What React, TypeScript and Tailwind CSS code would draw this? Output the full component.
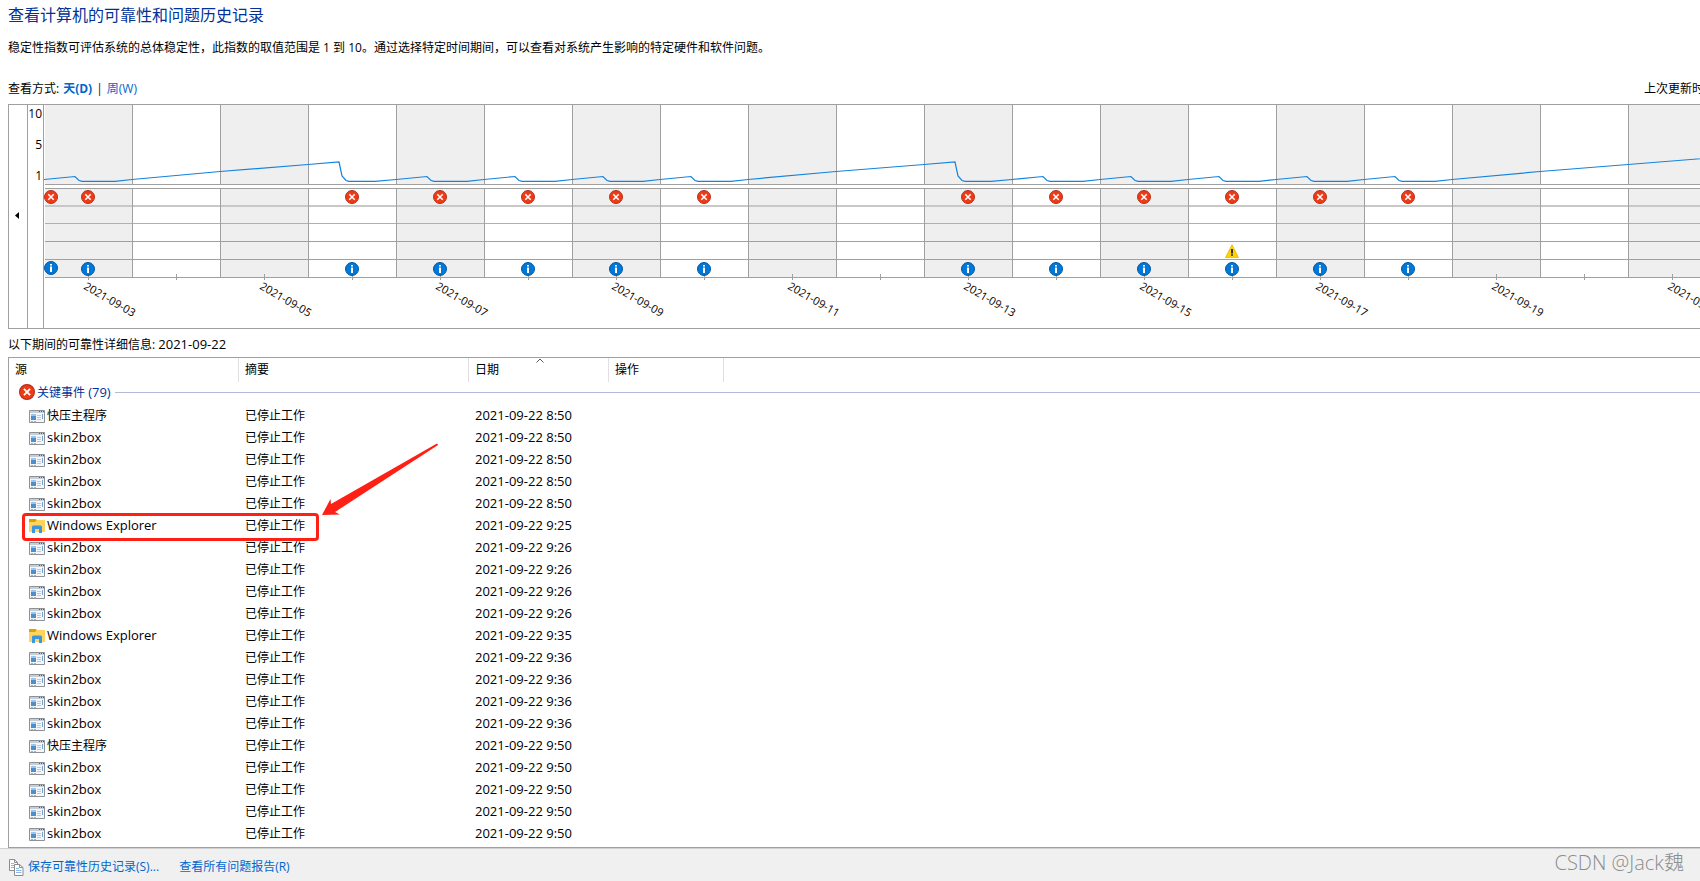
import clsx from "clsx";

type Day = {
  shape: "dip" | "peak" | "rise";
  from: number;
  to: number;
  label?: string;
  events?: boolean;
  warning?: boolean;
};

type EventRow = {
  name: string;
  time: string;
};

const DAY_WIDTH = 88;

const dip = { shape: "dip", from: 75, to: 75, events: true } as const;
const peak = { shape: "peak", from: 60, to: 75, events: true } as const;

const days: Day[] = [
  { ...dip, label: "2021-09-03" },
  { shape: "rise", from: 75, to: 67 },
  { shape: "rise", from: 67, to: 60, label: "2021-09-05" },
  { ...peak },
  { ...dip, label: "2021-09-07" },
  { ...dip },
  { ...dip, label: "2021-09-09" },
  { ...dip },
  { shape: "rise", from: 75, to: 67, label: "2021-09-11" },
  { shape: "rise", from: 67, to: 60 },
  { ...peak, label: "2021-09-13" },
  { ...dip },
  { ...dip, label: "2021-09-15" },
  { ...dip, warning: true },
  { ...dip, label: "2021-09-17" },
  { ...dip },
  { shape: "rise", from: 75, to: 67, label: "2021-09-19" },
  { shape: "rise", from: 67, to: 60 },
  { shape: "rise", from: 60, to: 53, label: "2021-09-21" },
];

const events: EventRow[] = [
  { name: "快压主程序", time: "8:50" },
  { name: "skin2box", time: "8:50" },
  { name: "skin2box", time: "8:50" },
  { name: "skin2box", time: "8:50" },
  { name: "skin2box", time: "8:50" },
  { name: "Windows Explorer", time: "9:25" },
  { name: "skin2box", time: "9:26" },
  { name: "skin2box", time: "9:26" },
  { name: "skin2box", time: "9:26" },
  { name: "skin2box", time: "9:26" },
  { name: "Windows Explorer", time: "9:35" },
  { name: "skin2box", time: "9:36" },
  { name: "skin2box", time: "9:36" },
  { name: "skin2box", time: "9:36" },
  { name: "skin2box", time: "9:36" },
  { name: "快压主程序", time: "9:50" },
  { name: "skin2box", time: "9:50" },
  { name: "skin2box", time: "9:50" },
  { name: "skin2box", time: "9:50" },
  { name: "skin2box", time: "9:50" },
];

const indexPoints = days
  .map((day, i) => {
    const x = i * DAY_WIDTH;
    const start = `${x},${day.from - 0.5}`;
    const end = `${x + DAY_WIDTH},${day.to - 0.5}`;
    if (day.shape === "dip")
      return `${start} ${x + 31},71.5 ${x + 35},75.5 ${x + 38},76.3 ${x + 71},76.3 ${end}`;
    if (day.shape === "peak")
      return `${start} ${x + 31},57 ${x + 34},71 ${x + 38},75.5 ${x + 41},76.3 ${x + 67},76.3 ${end}`;
    return `${start} ${end}`;
  })
  .join(" ");

function ErrorIcon({ className = "size-[14px]" }: { className?: string }) {
  return (
    <svg className={clsx("shrink-0", className)} viewBox="0 0 14 14">
      <circle cx="7" cy="7" r="6.5" fill="#ee3a17" stroke="#b3321b" />
      <path d="M4.3 4.3l5.4 5.4M9.7 4.3l-5.4 5.4" stroke="#fff" strokeWidth="1.6" />
    </svg>
  );
}

function InfoIcon() {
  return (
    <svg className="size-[14px] shrink-0" viewBox="0 0 14 14">
      <circle cx="7" cy="7" r="6.5" fill="#0078d7" stroke="#07559b" />
      <path d="M6 3h2v1.6H6zM6 5.6h2V11H6z" fill="#fff" />
    </svg>
  );
}

function WarningIcon() {
  return (
    <svg className="size-[14px] shrink-0" viewBox="0 0 14 14">
      <path d="M7 .8L13.4 13.4H.6z" fill="#ffd400" stroke="#e8b400" strokeWidth=".8" strokeLinejoin="round" />
      <path d="M6.1 5h1.8v4.4H6.1zM6.1 10.2h1.8v1.6H6.1z" fill="#222" />
    </svg>
  );
}

function ProgramIcon() {
  return (
    <svg className="size-4 shrink-0" viewBox="0 0 16 16">
      <path d="M.5 2.5h15v12H.5z" fill="#f4f6f8" stroke="#8b929a" />
      <path d="M1 3h14v2H1z" fill="#c9ced6" />
      <path d="M10 3h1v1h-1zM12 3h1v1h-1zM14 3h1v1h-1z" fill="#555e69" />
      <path d="M2 6h5v6H2z" fill="#9fc5ea" />
      <path d="M2 8h5v4H2z" fill="#4d8fcd" />
      <path d="M8 7.5h4M8 9.5h4M8 11.5h4" stroke="#c4c8ce" />
      <path d="M13 6h1v5h-1z" fill="#6fa3d4" />
      <path d="M2 13h2v1H2zM5 13h2v1H5z" fill="#a9afb8" />
    </svg>
  );
}

function ExplorerIcon() {
  return (
    <svg className="size-4 shrink-0" viewBox="0 0 16 16">
      <path d="M0 1h7l1 1.5V5H0z" fill="#dba200" />
      <path d="M0 4h6l2-2h8v12H0z" fill="#ffd35c" />
      <path d="M3 15V9q0-1.500 1.500-1.500h7Q13 7.500 13 9v6h-3v-4H6v4z" fill="#3a96dd" />
    </svg>
  );
}

function CopyIcon() {
  return (
    <svg className="h-[17px] w-[15px] shrink-0" viewBox="0 0 15 17">
      <path d="M.5.5h5l3 3v8h-8z" fill="#fff" stroke="#8c8c8c" />
      <path d="M5.5.5v3h3" fill="none" stroke="#8c8c8c" />
      <path d="M2 4.5h3M2 6.5h4M2 8.5h4" stroke="#8fb8e8" />
      <path d="M5.5 5.5h5l3.5 3v8H5.5z" fill="#fff" stroke="#8c8c8c" />
      <path d="M10.5 5.5v3H14" fill="none" stroke="#8c8c8c" />
      <path d="M7 9.5h3M7 11.5h5.5M7 13.5h5.5" stroke="#8fb8e8" />
    </svg>
  );
}

function DayColumn({ day, shaded }: { day: Day; shaded: boolean }) {
  const cell = "flex items-center justify-center pr-px";
  return (
    <div className="w-[88px] shrink-0">
      <div className={clsx("h-20 border-r border-b border-[#a0a0a0]", shaded && "bg-[#efefef]")} />
      <div className="h-[3px]" />
      <div className={clsx("border-t border-r border-[#a0a0a0]", shaded && "bg-[#efefef]")}>
        <div className={clsx(cell, "h-[18px] border-b-2 border-[#c8c8c8]")}>{day.events && <ErrorIcon />}</div>
        <div className={clsx(cell, "h-[17px] border-b border-[#b0b0b0]")} />
        <div className={clsx(cell, "h-[18px] border-b border-[#a0a0a0]")} />
        <div className={clsx(cell, "h-[18px] border-b border-[#a0a0a0]")}>{day.warning && <WarningIcon />}</div>
        <div className={clsx(cell, "relative h-[18px] border-b border-[#a0a0a0]")}>
          <span className="absolute -bottom-[3px] left-[43px] h-[6px] w-px bg-[#a0a0a0]" />
          {day.events && (
            <span className="relative">
              <InfoIcon />
            </span>
          )}
        </div>
      </div>
      <div className="relative h-[50px]">
        {day.label && (
          <span className="absolute -top-px left-10 origin-left rotate-30 text-[11px] leading-4 whitespace-nowrap">
            {day.label}
          </span>
        )}
      </div>
    </div>
  );
}

function ReliabilityChart() {
  return (
    <div className="mt-[5px] flex border-y border-l border-[#a0a0a0]">
      <button type="button" aria-label="上一页" className="flex w-[18px] shrink-0 items-center justify-center pr-[2px] pb-[2px]">
        <svg className="h-[7px] w-1" viewBox="0 0 4 7">
          <path d="M4 0v7L0 3.5z" />
        </svg>
      </button>
      <div className="flex w-[17px] shrink-0 flex-col items-end gap-[14px] border-x border-[#a0a0a0] pr-px text-xs leading-[17px]">
        <span>10</span>
        <span>5</span>
        <span>1</span>
      </div>
      <div className="relative flex min-w-0 flex-1 overflow-hidden pl-px">
        {days.map((day, i) => (
          <DayColumn key={i} day={day} shaded={i % 2 === 0} />
        ))}
        <svg className="absolute top-0 left-0 h-20 w-[1672px]" viewBox="0 0 1672 80">
          <polyline points={indexPoints} fill="none" stroke="#1583dc" strokeWidth="1.2" />
        </svg>
        <div className="absolute top-[85px] left-0 flex flex-col gap-[57px]">
          <ErrorIcon />
          <InfoIcon />
        </div>
      </div>
    </div>
  );
}

function EventTable() {
  const head = "border-r border-[#e0e0e0] pl-[6px] text-left font-normal";
  return (
    <div className="relative mt-[2px] border-y border-l border-[#a0a0a0] pb-[2px]">
      <table className="w-full table-fixed border-separate border-spacing-0">
        <colgroup>
          <col className="w-[230px]" />
          <col className="w-[230px]" />
          <col className="w-[140px]" />
          <col className="w-[115px]" />
          <col />
        </colgroup>
        <thead>
          <tr className="h-6">
            <th className={head}>源</th>
            <th className={head}>摘要</th>
            <th className={clsx(head, "relative")} aria-sort="ascending">
              日期
              <svg className="absolute top-0 left-[67px] h-[5px] w-2" viewBox="0 0 8 5">
                <path d="M.5 4.5L4 1l3.5 3.5" fill="none" stroke="#555" />
              </svg>
            </th>
            <th className={head}>操作</th>
            <th />
          </tr>
        </thead>
        <tbody>
          <tr className="h-[23px]">
            <td colSpan={5}>
              <div className="flex items-center pb-[2px] pl-[10px] text-[#003399]">
                <ErrorIcon className="size-4" />
                <span className="ml-[2px]">
                  关键事件 <span className="text-[13px]">(79)</span>
                </span>
                <span className="ml-1 h-px flex-1 bg-[#b0bcd8]" />
              </div>
            </td>
          </tr>
          {events.map((event, i) => (
            <tr key={i} className="h-[22px]">
              <td>
                <div className="flex items-center gap-[2px] pl-5">
                  {event.name === "Windows Explorer" ? <ExplorerIcon /> : <ProgramIcon />}
                  <span className={event.name === "快压主程序" ? "text-xs" : "text-[13px]"}>{event.name}</span>
                </div>
              </td>
              <td className="pl-[6px]">已停止工作</td>
              <td className="pl-[6px] text-[13px]">2021-09-22 {event.time}</td>
              <td />
              <td />
            </tr>
          ))}
        </tbody>
      </table>

      {/* marker around the first Explorer crash */}
      <div className="absolute top-[155px] left-[13px] h-7 w-[297px] rounded border-3 border-[#ff2015]" />
      <svg className="absolute top-[85px] left-[312px] h-[74px] w-[118px]" viewBox="0 0 118 74">
        <path d="M1 72L9.5 56l.5 5L115.5.8q2-.3 1.2 1.4L14 69l5 2.500z" fill="#ff2015" />
      </svg>
    </div>
  );
}

export default function App() {
  return (
    <div className="flex min-h-screen flex-col overflow-x-hidden bg-white font-['Open_Sans','Noto_Sans_CJK_SC',sans-serif] text-xs text-black">
      <main className="flex-1 pt-[3px] pl-2">
        <h1 className="text-base leading-6 text-[#003399]">查看计算机的可靠性和问题历史记录</h1>
        <p className="mt-[11px] leading-5">
          稳定性指数可评估系统的总体稳定性，此指数的取值范围是 1 到 10。通过选择特定时间期间，可以查看对系统产生影响的特定硬件和软件问题。
        </p>
        <div className="mt-[21px] flex justify-between leading-5">
          <div className="flex gap-1">
            <span>查看方式:</span>
            <a href="#day" className="font-bold text-[#0066cc]">
              天(D)
            </a>
            <span className="text-[#4b0030]">|</span>
            <a href="#week" className="text-[#0066cc]">
              周(W)
            </a>
          </div>
          <span className="w-14 overflow-hidden whitespace-nowrap">上次更新时</span>
        </div>
        <ReliabilityChart />
        <h2 className="mt-[5px] leading-5">
          以下期间的可靠性详细信息: <span className="text-[13px]">2021-09-22</span>
        </h2>
        <EventTable />
      </main>
      <footer className="flex h-[34px] items-center border-t border-[#d0d0d0] bg-[#f0f0f0] pt-[3px] pr-4 pl-[9px]">
        <CopyIcon />
        <a href="#save" className="ml-1 text-[#0066cc]">
          保存可靠性历史记录(S)...
        </a>
        <a href="#reports" className="ml-5 text-[#0066cc]">
          查看所有问题报告(R)
        </a>
        <span className="ml-auto pb-2 text-xl leading-6 font-light text-[#8c8c8c]">CSDN @Jack魏</span>
      </footer>
    </div>
  );
}
